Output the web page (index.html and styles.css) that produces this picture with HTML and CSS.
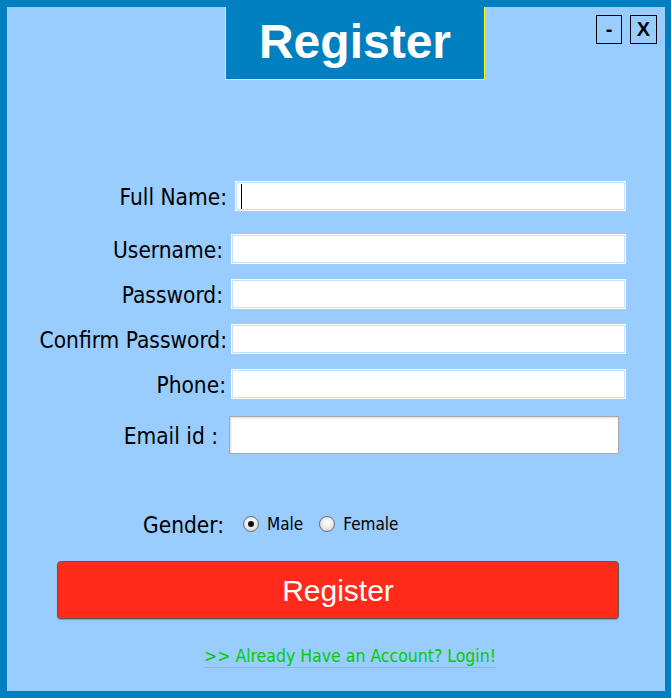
FILE: index.html
```html
<!DOCTYPE html>
<html lang="en">
<head>
<meta charset="utf-8">
<title>Register</title>
<link rel="stylesheet" href="styles.css">
</head>
<body>
<div class="window">
  <header class="header">
    <h1 class="title">Register</h1>
    <div class="controls">
      <button class="ctrl" type="button">-</button>
      <button class="ctrl ctrl-close" type="button">X</button>
    </div>
  </header>

  <form class="form">
    <div class="field field-name">
      <label class="label">Full Name:</label>
      <div class="box"><span class="caret"></span></div>
    </div>
    <div class="field field-user">
      <label class="label">Username:</label>
      <div class="box"></div>
    </div>
    <div class="field field-pass">
      <label class="label">Password:</label>
      <div class="box"></div>
    </div>
    <div class="field field-confirm">
      <label class="label">Confirm Password:</label>
      <div class="box"></div>
    </div>
    <div class="field field-phone">
      <label class="label">Phone:</label>
      <div class="box"></div>
    </div>
    <div class="field field-email">
      <label class="label">Email id :</label>
      <div class="box box-email"></div>
    </div>

    <div class="gender">
      <span class="label gender-label">Gender:</span>
      <span class="radio radio-on"></span><span class="opt">Male</span>
      <span class="radio"></span><span class="opt">Female</span>
    </div>

    <button class="submit" type="button">Register</button>

    <div class="login-row"><a class="login">&gt;&gt; Already Have an Account? Login!</a></div>
  </form>
</div>
</body>
</html>
```

FILE: styles.css
```css
html, body {
  margin: 0;
  padding: 0;
}
body {
  width: 671px;
  height: 698px;
  font-family: "DejaVu Sans Condensed", "DejaVu Sans", sans-serif;
  font-stretch: condensed;
}
.window {
  box-sizing: border-box;
  width: 671px;
  height: 698px;
  background: #99ccff;
  border-style: solid;
  border-color: #0080c0;
  border-width: 7px 6px 7px 7px;
  display: flex;
  flex-direction: column;
}
.header {
  display: flex;
  align-items: flex-start;
  height: 73px;
}
.title {
  box-sizing: border-box;
  margin: 0 0 0 218px;
  width: 260px;
  height: 73px;
  background: #0080c0;
  border: 1px solid #ffff00;
  border-top: none;
  color: #fff;
  font-family: "Liberation Sans", Arial, sans-serif;
  font-stretch: normal;
  font-weight: bold;
  font-size: 48px;
  line-height: 70px;
  text-align: center;
}
.controls {
  margin-left: auto;
  margin-right: 8px;
  margin-top: 8px;
  display: flex;
  gap: 8px;
}
.ctrl {
  box-sizing: border-box;
  width: 26px;
  height: 29px;
  padding: 0;
  background: transparent;
  border: 1px solid #000;
  font-family: "Liberation Sans", Arial, sans-serif;
  font-weight: bold;
  font-size: 20px;
  line-height: 27px;
  color: #000;
}
.ctrl-close {
  width: 27px;
}
.form {
  display: flex;
  flex-direction: column;
  padding-top: 101px;
}
.field {
  display: flex;
  align-items: center;
  height: 30px;
}
.label {
  text-align: right;
  font-size: 22.5px;
  color: #000;
  white-space: nowrap;
  padding-top: 2px;
}
.field .label {
  width: 220px;
}
.field-name .label { margin-right: 8px; }
.field-user .label { width: 216px; margin-right: 8px; }
.field-pass .label { width: 216px; margin-right: 8px; }
.field-confirm .label { margin-right: 4px; }
.field-phone .label { width: 219px; margin-right: 5px; }
.field-email .label { width: 211px; margin-right: 11px; }
.field-user { margin-top: 23px; }
.field-pass, .field-confirm, .field-phone { margin-top: 15px; }
.field-email { margin-top: 17px; height: 38px; }
.box {
  box-sizing: border-box;
  width: 395px;
  height: 30px;
  background: #fff;
  box-shadow: inset 0 0 0 1px #fff, inset 0 0 0 2px #c4e0fb;
  display: flex;
  align-items: center;
}
.field-name .box { width: 391px; }
.box-email {
  width: 390px;
  height: 38px;
  border: 1px solid #a9a9a9;
  box-shadow: inset 1px 1px 2px rgba(0,0,0,0.15);
}
.caret {
  width: 1px;
  height: 25px;
  margin-left: 6px;
  background: #000;
}
.gender {
  display: flex;
  align-items: center;
  margin-top: 54px;
  height: 32px;
  padding-left: 136px;
}
.gender-label {
  font-size: 22.5px;
  margin-right: 19px;
}
.radio {
  box-sizing: border-box;
  width: 16px;
  height: 16px;
  border-radius: 50%;
  border: 1px solid #6f6f6f;
  background: radial-gradient(circle at 50% 40%, #ffffff 0%, #e8e8e8 55%, #bdbdbd 100%);
  position: relative;
}
.radio-on::after {
  content: "";
  position: absolute;
  left: 4px;
  top: 4px;
  width: 6px;
  height: 6px;
  border-radius: 50%;
  background: #111;
}
.opt {
  font-size: 17px;
  margin-left: 8px;
  margin-right: 16px;
  color: #000;
}
.submit {
  box-sizing: border-box;
  margin: 21px 0 0 50px;
  width: 562px;
  height: 58px;
  background: #ff2a1a;
  border: 1px solid #5a5a5a;
  border-radius: 4px;
  box-shadow: 0 1px 1px rgba(0,0,0,0.25);
  color: #fff;
  font-family: "Liberation Sans", Arial, sans-serif;
  font-stretch: normal;
  font-size: 30px;
  padding: 2px 0 0;
}
.login-row {
  display: flex;
  margin-top: 27px;
  padding-left: 197px;
}
.login {
  font-size: 17.5px;
  color: #00cc00;
  line-height: 21px;
  border-bottom: 1px solid rgba(120,140,160,0.35);
}
```
